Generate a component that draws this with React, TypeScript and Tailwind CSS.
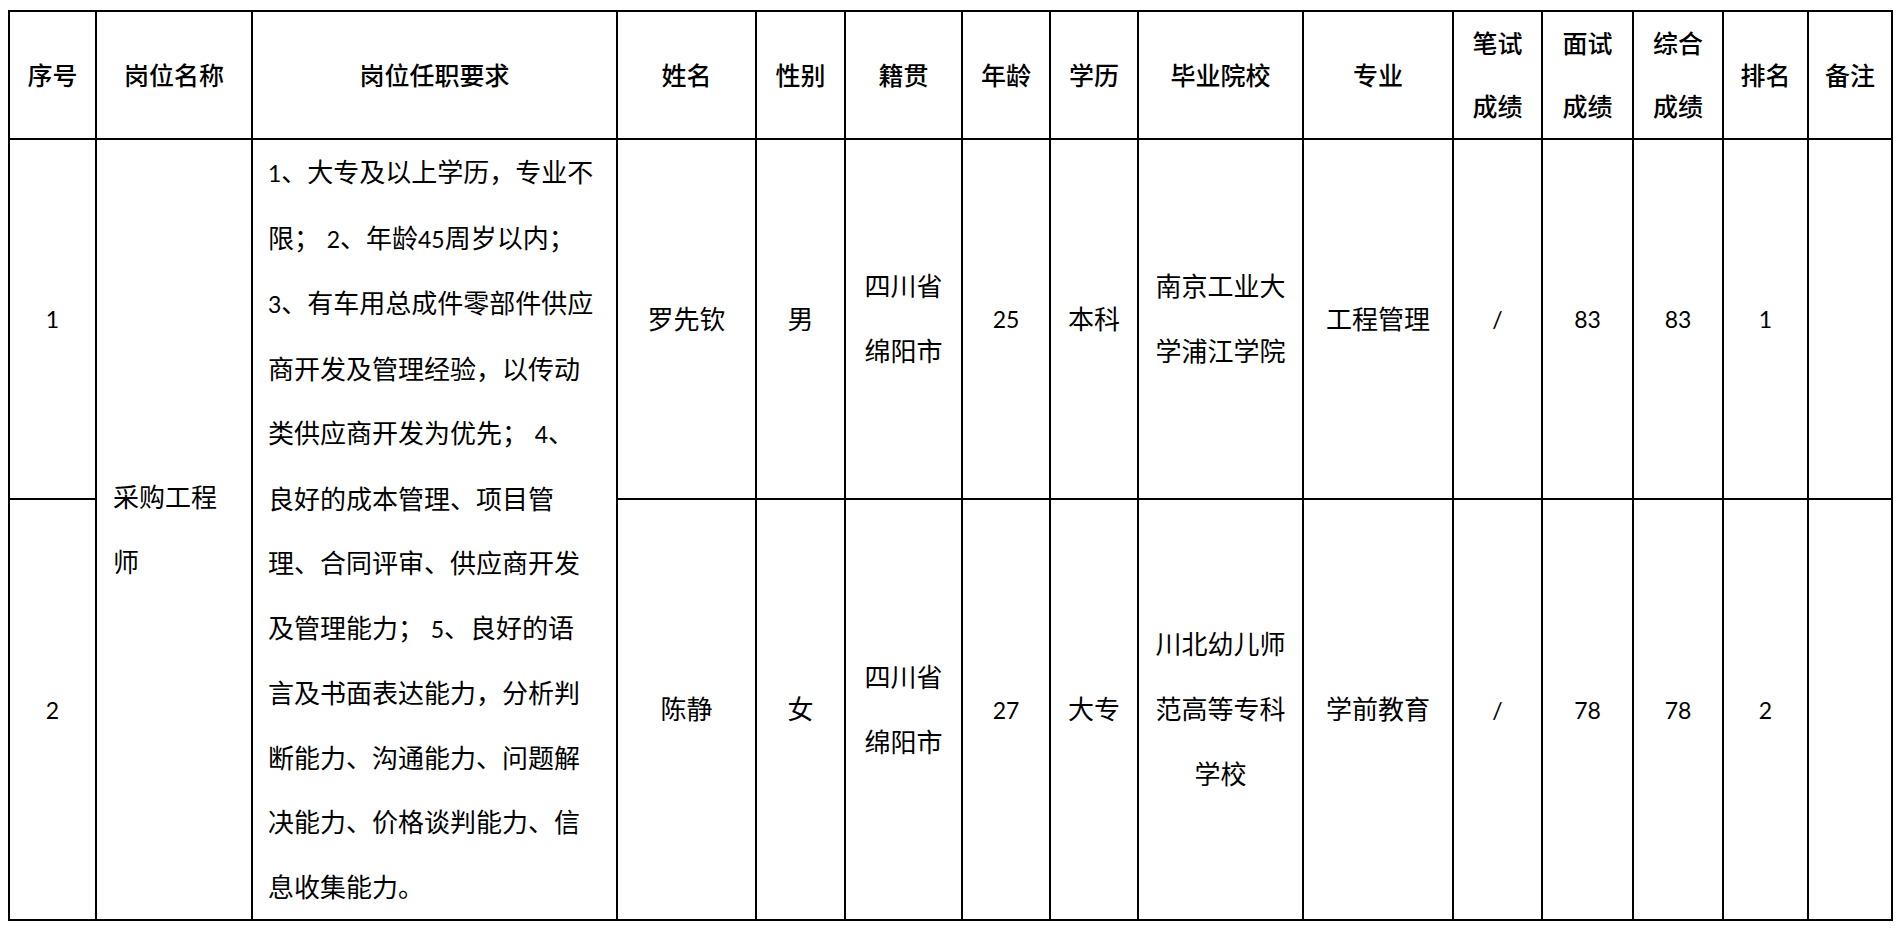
import React from 'react'

// 数字用 Lato 缩小一号，接近原图里 Calibri 的宽度
function Num({ children }: { children: React.ReactNode }) {
  return <span className="text-[23px]">{children}</span>
}

function Lines({ lines }: { lines: React.ReactNode[] }) {
  return (
    <>
      {lines.map((l, i) => (
        <div key={i}>{l}</div>
      ))}
    </>
  )
}

const th = 'border-2 border-black p-0 text-center align-middle text-[25px] leading-[63px] font-medium text-black'
const td = 'border-2 border-black p-0 text-center align-middle text-[26px] leading-[65px] font-normal text-black'

const requirement: React.ReactNode[] = [
  <><Num>1</Num>、大专及以上学历，专业不</>,
  <>限； <Num>2</Num>、年龄<Num>45</Num>周岁以内；</>,
  <><Num>3</Num>、有车用总成件零部件供应</>,
  <>商开发及管理经验，以传动</>,
  <>类供应商开发为优先； <Num>4</Num>、</>,
  <>良好的成本管理、项目管</>,
  <>理、合同评审、供应商开发</>,
  <>及管理能力； <Num>5</Num>、良好的语</>,
  <>言及书面表达能力，分析判</>,
  <>断能力、沟通能力、问题解</>,
  <>决能力、价格谈判能力、信</>,
  <>息收集能力。</>,
]

interface Candidate {
  no: string
  name: string
  gender: string
  origin: string[]
  age: string
  edu: string
  school: string[]
  major: string
  written: string
  interview: string
  total: string
  rank: string
  rowClass: string
}

const candidates: Candidate[] = [
  {
    no: '1',
    name: '罗先钦',
    gender: '男',
    origin: ['四川省', '绵阳市'],
    age: '25',
    edu: '本科',
    school: ['南京工业大', '学浦江学院'],
    major: '工程管理',
    written: '/',
    interview: '83',
    total: '83',
    rank: '1',
    rowClass: 'h-[358px]',
  },
  {
    no: '2',
    name: '陈静',
    gender: '女',
    origin: ['四川省', '绵阳市'],
    age: '27',
    edu: '大专',
    school: ['川北幼儿师', '范高等专科', '学校'],
    major: '学前教育',
    written: '/',
    interview: '78',
    total: '78',
    rank: '2',
    rowClass: 'h-[418px]',
  },
]

export default function App() {
  return (
    <div className="min-h-screen bg-white pl-[8px] pt-[10px] [font-family:'Lato','Noto_Sans_CJK_SC',sans-serif]">
      <table className="border-collapse table-fixed">
        <colgroup>
          <col className="w-[87px]" />
          <col className="w-[156px]" />
          <col className="w-[365px]" />
          <col className="w-[139px]" />
          <col className="w-[89px]" />
          <col className="w-[117px]" />
          <col className="w-[88px]" />
          <col className="w-[88px]" />
          <col className="w-[165px]" />
          <col className="w-[150px]" />
          <col className="w-[89px]" />
          <col className="w-[91px]" />
          <col className="w-[90px]" />
          <col className="w-[85px]" />
          <col className="w-[84px]" />
        </colgroup>
        <thead>
          <tr className="h-[128px]">
            <th className={th}>序号</th>
            <th className={th}>岗位名称</th>
            <th className={th}>岗位任职要求</th>
            <th className={th}>姓名</th>
            <th className={th}>性别</th>
            <th className={th}>籍贯</th>
            <th className={th}>年龄</th>
            <th className={th}>学历</th>
            <th className={th}>毕业院校</th>
            <th className={th}>专业</th>
            <th className={th}>
              <Lines lines={['笔试', '成绩']} />
            </th>
            <th className={th}>
              <Lines lines={['面试', '成绩']} />
            </th>
            <th className={th}>
              <Lines lines={['综合', '成绩']} />
            </th>
            <th className={th}>排名</th>
            <th className={th}>备注</th>
          </tr>
        </thead>
        <tbody>
          {candidates.map((c, i) => (
            <tr key={c.no} className={c.rowClass}>
              <td className={td}>
                <Num>{c.no}</Num>
              </td>
              {i === 0 && (
                <>
                  <td rowSpan={2} className={`${td} !text-left pl-[16px]`}>
                    <Lines lines={['采购工程', '师']} />
                  </td>
                  <td rowSpan={2} className={`${td} !text-left !leading-[64.5px] pl-[15px]`}>
                    <Lines lines={requirement} />
                  </td>
                </>
              )}
              <td className={td}>{c.name}</td>
              <td className={td}>{c.gender}</td>
              <td className={td}>
                <Lines lines={c.origin} />
              </td>
              <td className={td}>
                <Num>{c.age}</Num>
              </td>
              <td className={td}>{c.edu}</td>
              <td className={td}>
                <Lines lines={c.school} />
              </td>
              <td className={td}>{c.major}</td>
              <td className={td}>
                <Num>{c.written}</Num>
              </td>
              <td className={td}>
                <Num>{c.interview}</Num>
              </td>
              <td className={td}>
                <Num>{c.total}</Num>
              </td>
              <td className={td}>
                <Num>{c.rank}</Num>
              </td>
              <td className={td}></td>
            </tr>
          ))}
        </tbody>
      </table>
    </div>
  )
}
